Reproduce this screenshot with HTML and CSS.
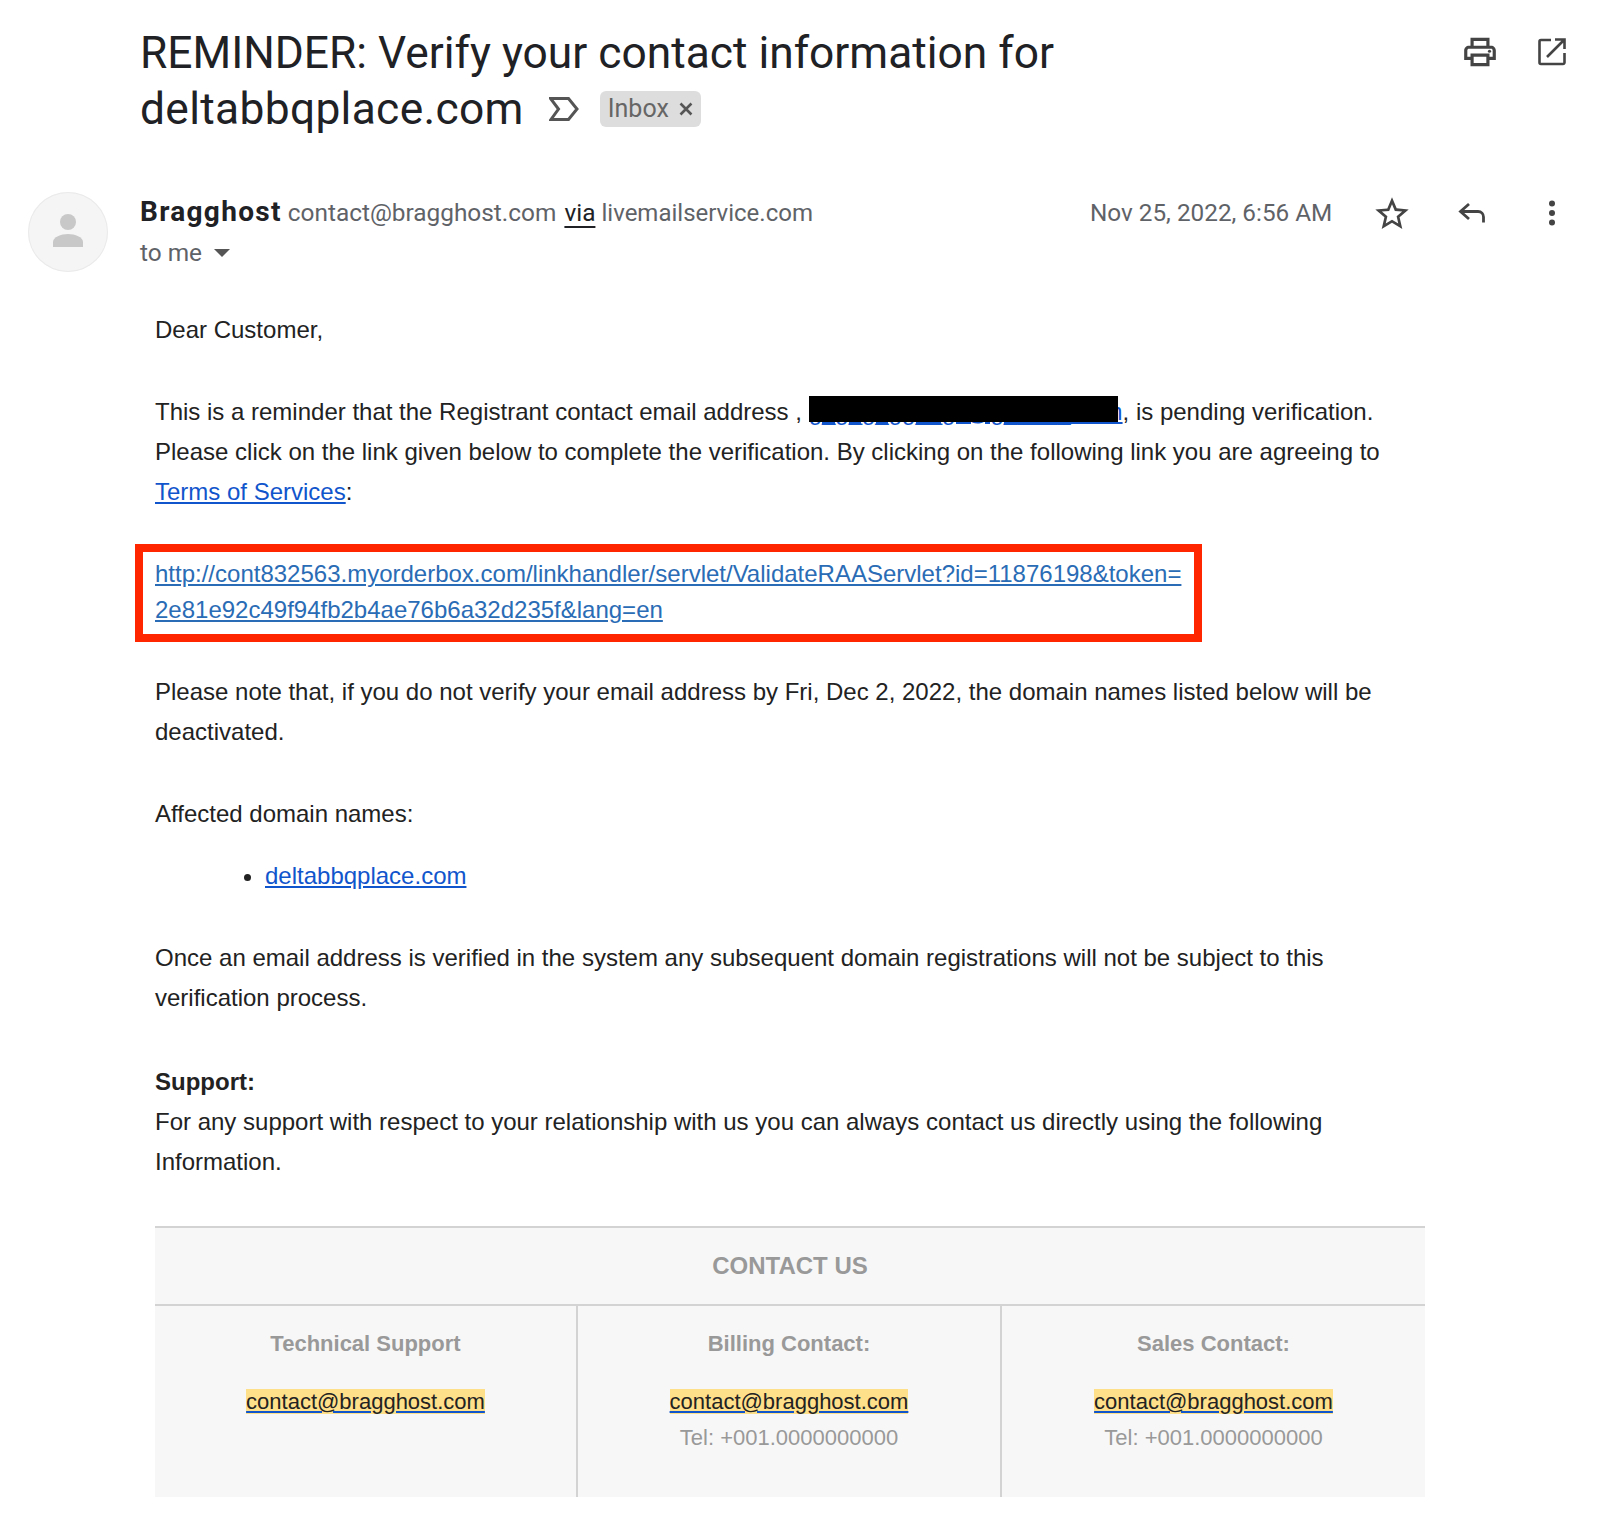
FILE: index.html
```html
<!DOCTYPE html>
<html lang="en">
<head>
<meta charset="utf-8">
<title>REMINDER: Verify your contact information</title>
<link rel="stylesheet" href="styles.css">
</head>
<body>
<main class="page">
  <header class="subject-row">
    <h1 class="subject">REMINDER: Verify your contact information for <span class="subject-domain">deltabbqplace.com</span><span class="subject-tail"><svg class="marker" viewBox="0 0 30 24"><path d="M1.500 1.500H19.500L28 12L19.500 22.500H2L9.500 12Z" fill="none" stroke="#555" stroke-width="3"/></svg><span class="chip">Inbox<svg class="chip-x" viewBox="0 0 14 14"><path d="M1.500 1.500 12.500 12.500M12.500 1.500 1.500 12.500" fill="none" stroke="#555" stroke-width="2.600"/></svg></span></span></h1>
    <div class="top-actions">
      <svg class="icon-print" viewBox="0 0 24 24"><path d="M19 8h-1V3H6v5H5c-1.660 0-3 1.340-3 3v6h4v4h12v-4h4v-6c0-1.660-1.340-3-3-3zM8 5h8v3H8V5zm8 14H8v-4h8v4zm4-4h-2v-2H6v2H4v-4c0-.550.450-1 1-1h14c.550 0 1 .450 1 1v4z" fill="#444"/><circle cx="18" cy="11.500" r="1" fill="#444"/></svg>
      <svg class="icon-open" viewBox="0 0 28 28"><path d="M13 2H3a1.500 1.500 0 0 0-1.500 1.500v21A1.500 1.500 0 0 0 3 26h22a1.500 1.500 0 0 0 1.500-1.500V15M26.500 1.500 9 19M17 1.500h9.500V11" fill="none" stroke="#444" stroke-width="2.600"/></svg>
    </div>
  </header>

  <section class="sender-row">
    <div class="avatar"><svg viewBox="0 0 80 80"><circle cx="40" cy="30" r="8" fill="#c8c8c8"/><path d="M25 55V50c0-5 8-8 15-8s15 3 15 8v5z" fill="#c8c8c8"/></svg></div>
    <div class="sender-info">
      <div class="from"><strong class="name">Bragghost</strong> contact@bragghost.com <span class="via">via</span> <span class="relay">livemailservice.com</span></div>
      <div class="to">to me<span class="caret"></span></div>
    </div>
    <div class="date">Nov 25, 2022, 6:56 AM</div>
    <svg class="icon-star" viewBox="0 0 24 24"><path d="M22 9.240l-7.190-.620L12 2 9.190 8.630 2 9.240l5.460 4.730L5.820 21 12 17.270 18.180 21l-1.630-7.030L22 9.240zM12 15.400l-3.760 2.270 1-4.280-3.320-2.880 4.380-.380L12 6.100l1.710 4.040 4.380.380-3.320 2.880 1 4.280L12 15.400z" fill="#444"/></svg>
    <svg class="icon-reply" viewBox="0 0 28 21"><path d="M11 2 2.500 9.500 11 17M3 9.500h17c3.500 0 5.500 2.500 5.500 5.500v5.500" fill="none" stroke="#444" stroke-width="2.800"/></svg>
    <svg class="icon-dots" viewBox="0 0 8 26"><circle cx="4" cy="3.500" r="3" fill="#444"/><circle cx="4" cy="13" r="3" fill="#444"/><circle cx="4" cy="22.500" r="3" fill="#444"/></svg>
  </section>

  <article class="mail">
    <p class="para">Dear Customer,</p>
    <p class="para para-before-box">This is a reminder that the Registrant contact email address , <span class="redacted-wrap"><a class="link" href="#">g_g_g_gg__gii@g_____.com</a><span class="redaction"></span></span>, is pending verification. Please click on the link given below to complete the verification. By clicking on the following link you are agreeing to <a class="link" href="#">Terms of Services</a>:</p>
    <div class="callout"><a class="callout-link" href="#">http://cont832563.myorderbox.com/linkhandler/servlet/ValidateRAAServlet?id=11876198&amp;token=<br>2e81e92c49f94fb2b4ae76b6a32d235f&amp;lang=en</a></div>
    <p class="para">Please note that, if you do not verify your email address by Fri, Dec 2, 2022, the domain names listed below will be deactivated.</p>
    <p class="para para-tight">Affected domain names:</p>
    <ul class="domains"><li><a class="link" href="#">deltabbqplace.com</a></li></ul>
    <p class="para para-loose">Once an email address is verified in the system any subsequent domain registrations will not be subject to this verification process.</p>
    <p class="para"><strong>Support:</strong><br>For any support with respect to your relationship with us you can always contact us directly using the following Information.</p>

    <section class="contact">
      <h2 class="contact-title">CONTACT US</h2>
      <div class="contact-cols">
        <div class="contact-col">
          <h3 class="col-title">Technical Support</h3>
          <a class="mail-link" href="#">contact@bragghost.com</a>
        </div>
        <div class="contact-col">
          <h3 class="col-title">Billing Contact:</h3>
          <a class="mail-link" href="#">contact@bragghost.com</a>
          <div class="tel">Tel: +001.0000000000</div>
        </div>
        <div class="contact-col">
          <h3 class="col-title">Sales Contact:</h3>
          <a class="mail-link" href="#">contact@bragghost.com</a>
          <div class="tel">Tel: +001.0000000000</div>
        </div>
      </div>
    </section>
  </article>
</main>
</body>
</html>
```
FILE: styles.css
```css
* { box-sizing: border-box; }
html, body { margin: 0; background: #fff; }
body { height: 1539px; overflow: hidden; font-family: "Liberation Sans", Arial, sans-serif; color: #222; }
.page { padding-top: 25px; }

.subject-row { display: flex; padding-left: 140px; height: 131px; }
.subject { width: 1000px; margin: 0; font: 400 44.300px/56px Roboto, sans-serif; color: #202124; }
.subject-domain { letter-spacing: .33px; }
.subject-tail { display: inline-flex; align-items: center; vertical-align: 3px; margin-left: 25px; }
.marker { width: 30px; height: 24px; margin-right: 21px; }
.chip { display: inline-flex; align-items: center; width: 101px; height: 36px; padding: 0 8px; background: #ddd; border-radius: 6px; font: 400 25px/36px Roboto, sans-serif; color: #666; }
.chip-x { width: 14px; height: 14px; margin-left: 10px; }
.top-actions { display: flex; gap: 42px; margin-left: auto; padding: 13px 34px 0 0; }
.icon-print { width: 38px; height: 38px; margin: -5px -3px 0; }
.icon-open { width: 28px; height: 28px; }

.sender-row { display: flex; padding: 36px 0 0 28px; height: 154px; }
.avatar { width: 80px; height: 80px; border-radius: 50%; background: #f5f5f5; box-shadow: inset 0 0 0 1px #eaeaea; }
.avatar svg { display: block; }
.sender-info { margin-left: 32px; width: 950px; font: 400 24.400px/32px Roboto, sans-serif; color: #5f6368; padding-top: 4px; }
.name { font-weight: 700; color: #202124; font-size: 28px; letter-spacing: 1.300px; }
.via { color: #202124; margin-left: 2px; text-decoration: underline; text-underline-offset: 5px; }
.relay { font-size: 24px; }
.to { margin-top: 8px; display: flex; align-items: center; }
.caret { width: 0; height: 0; margin-left: 12px; border: 8px solid transparent; border-top: 8px solid #555; border-bottom: 0; }
.date { width: 242px; white-space: nowrap; font: 400 24.300px/32px Roboto, sans-serif; color: #5f6368; padding-top: 5px; }
.icon-star { width: 40px; height: 40px; margin: 2px 0 0 40px; }
.icon-reply { width: 28px; height: 21px; margin: 10px 0 0 46px; }
.icon-dots { width: 8px; height: 26px; margin: 8px 0 0 62px; }

.mail { padding-left: 155px; width: 1425px; font-size: 24px; line-height: 40px; color: #222; }
.para { margin: 0 0 42px; width: 1240px; }
.para-before-box { margin-bottom: 32px; }
.para-tight { margin-bottom: 22px; }
.para-loose { margin-bottom: 44px; }
.link { color: #15c; }
.redacted-wrap { position: relative; display: inline-block; }
.redaction { position: absolute; left: 0; top: 4px; width: 309px; height: 26px; background: #000; }
.callout { margin: 0 0 30px -20px; width: 1067px; height: 98px; padding: 4px 0 0 12px; border: 8px solid #ff2600; line-height: 36px; }
.callout-link { color: #2a6cb5; white-space: nowrap; }
.domains { margin: 0 0 42px; padding-left: 110px; }
.contact { margin-top: 44px; width: 1270px; background: #f7f7f7; border-top: 2px solid #d3d3d3; height: 271px; color: #999; }
.contact-title { margin: 0; height: 78px; border-bottom: 2px solid #d3d3d3; font-size: 24px; line-height: 76px; font-weight: 700; text-align: center; }
.contact-cols { display: grid; grid-template-columns: 421px 424px 425px; height: 191px; font-size: 22px; }
.contact-col { text-align: center; border-left: 2px solid #d3d3d3; padding-top: 18px; }
.contact-col:first-child { border-left: 0; }
.col-title { margin: 0 0 18px; font-size: 22px; line-height: 40px; font-weight: 700; }
.mail-link { color: #222; text-decoration-color: #15c; background: #ffe08a; }
.tel { line-height: 32px; }
```
